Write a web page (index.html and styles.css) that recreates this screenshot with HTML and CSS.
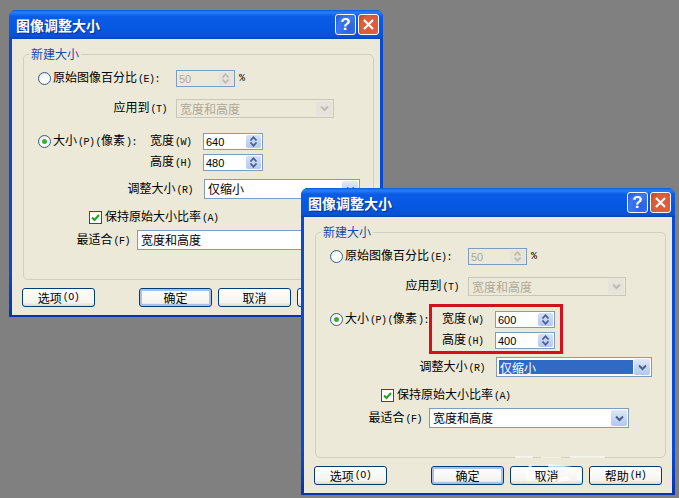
FILE: index.html
```html
<!DOCTYPE html>
<html lang="zh-CN">
<head>
    <meta charset="UTF-8">
    <title>图像调整大小</title>
    <link rel="stylesheet" href="styles.css">
</head>
<body>
    <svg class="icon-defs" width="0" height="0">
        <symbol id="chevron" viewBox="0 0 9 7">
            <path d="M1 1.5 L4.5 5 L8 1.5" fill="none" stroke="currentColor" stroke-width="2"/>
        </symbol>
        <symbol id="arrow-up" viewBox="0 0 9 5">
            <path d="M1.5 4.5 L4.5 1.2 L7.5 4.5" fill="none" stroke="currentColor" stroke-width="1.7"/>
        </symbol>
        <symbol id="arrow-down" viewBox="0 0 9 5">
            <path d="M1.5 0.5 L4.5 3.8 L7.5 0.5" fill="none" stroke="currentColor" stroke-width="1.7"/>
        </symbol>
        <symbol id="tick" viewBox="0 0 11 11">
            <path d="M2 5.5 L4.5 8 L9 3" fill="none" stroke="currentColor" stroke-width="2"/>
        </symbol>
    </svg>

    <!-- окно сзади -->
    <div class="dialog dialog-back">
        <div class="titlebar">
            <span class="title">图像调整大小</span>
            <span class="title-btn help">?</span>
            <span class="title-btn close">
                <svg viewBox="0 0 13 13" width="13" height="13"><path d="M2 2 L11 11 M11 2 L2 11" stroke="#fff" stroke-width="2.2"/></svg>
            </span>
        </div>
        <div class="dialog-body">
            <fieldset class="group">
                <legend>新建大小</legend>
                <div class="row row-percent">
                    <span class="choice"><i class="radio"></i><span>原始图像百分比<b>(E):</b></span></span>
                    <span class="field field-percent disabled">
                        <span class="value">50</span>
                        <span class="spin"><span><svg><use href="#arrow-up"/></svg></span><span><svg><use href="#arrow-down"/></svg></span></span>
                    </span>
                    <span class="unit">%</span>
                </div>
                <div class="row row-apply">
                    <span class="lbl lbl-apply">应用到<b>(T)</b></span>
                    <span class="field select-apply disabled">
                        <span class="value">宽度和高度</span>
                        <span class="drop"><svg><use href="#chevron"/></svg></span>
                    </span>
                </div>
                <div class="row row-size">
                    <span class="choice choice-size"><i class="radio checked"></i><span>大小<b>(P)</b><b>(</b>像素<b>):</b></span></span>
                    <div class="size-fields">
                        <div class="size-line">
                            <span class="lbl-size">宽度<b>(W)</b></span>
                            <span class="field field-size">
                                <span class="value">640</span>
                                <span class="spin"><span><svg><use href="#arrow-up"/></svg></span><span><svg><use href="#arrow-down"/></svg></span></span>
                            </span>
                        </div>
                        <div class="size-line">
                            <span class="lbl-size">高度<b>(H)</b></span>
                            <span class="field field-size">
                                <span class="value">480</span>
                                <span class="spin"><span><svg><use href="#arrow-up"/></svg></span><span><svg><use href="#arrow-down"/></svg></span></span>
                            </span>
                        </div>
                    </div>
                </div>
                <div class="row row-resize">
                    <span class="lbl lbl-resize">调整大小<b>(R)</b></span>
                    <span class="field select-resize">
                        <span class="value">仅缩小</span>
                        <span class="drop"><svg><use href="#chevron"/></svg></span>
                    </span>
                </div>
                <div class="row row-keep">
                    <i class="checkbox"><svg><use href="#tick"/></svg></i>
                    <span>保持原始大小比率<b>(A)</b></span>
                </div>
                <div class="row row-fit">
                    <span class="lbl lbl-fit">最适合<b>(F)</b></span>
                    <span class="field select-fit">
                        <span class="value">宽度和高度</span>
                        <span class="drop"><svg><use href="#chevron"/></svg></span>
                    </span>
                </div>
            </fieldset>
            <div class="buttons">
                <span class="btn btn-options">选项<b>(O)</b></span>
                <span class="btn btn-default">确定</span>
                <span class="btn">取消</span>
                <span class="btn">帮助<b>(H)</b></span>
            </div>
        </div>
    </div>

    <!-- окно спереди -->
    <div class="dialog dialog-front">
        <div class="titlebar">
            <span class="title">图像调整大小</span>
            <span class="title-btn help">?</span>
            <span class="title-btn close">
                <svg viewBox="0 0 13 13" width="13" height="13"><path d="M2 2 L11 11 M11 2 L2 11" stroke="#fff" stroke-width="2.2"/></svg>
            </span>
        </div>
        <div class="dialog-body">
            <fieldset class="group">
                <legend>新建大小</legend>
                <div class="row row-percent">
                    <span class="choice"><i class="radio"></i><span>原始图像百分比<b>(E):</b></span></span>
                    <span class="field field-percent disabled">
                        <span class="value">50</span>
                        <span class="spin"><span><svg><use href="#arrow-up"/></svg></span><span><svg><use href="#arrow-down"/></svg></span></span>
                    </span>
                    <span class="unit">%</span>
                </div>
                <div class="row row-apply">
                    <span class="lbl lbl-apply">应用到<b>(T)</b></span>
                    <span class="field select-apply disabled">
                        <span class="value">宽度和高度</span>
                        <span class="drop"><svg><use href="#chevron"/></svg></span>
                    </span>
                </div>
                <div class="row row-size">
                    <span class="choice choice-size"><i class="radio checked"></i><span>大小<b>(P)</b><b>(</b>像素<b>):</b></span></span>
                    <div class="size-fields marked">
                        <div class="size-line">
                            <span class="lbl-size">宽度<b>(W)</b></span>
                            <span class="field field-size">
                                <span class="value">600</span>
                                <span class="spin"><span><svg><use href="#arrow-up"/></svg></span><span><svg><use href="#arrow-down"/></svg></span></span>
                            </span>
                        </div>
                        <div class="size-line">
                            <span class="lbl-size">高度<b>(H)</b></span>
                            <span class="field field-size">
                                <span class="value">400</span>
                                <span class="spin"><span><svg><use href="#arrow-up"/></svg></span><span><svg><use href="#arrow-down"/></svg></span></span>
                            </span>
                        </div>
                    </div>
                </div>
                <div class="row row-resize">
                    <span class="lbl lbl-resize">调整大小<b>(R)</b></span>
                    <span class="field select-resize focused">
                        <span class="value">仅缩小</span>
                        <span class="drop"><svg><use href="#chevron"/></svg></span>
                    </span>
                </div>
                <div class="row row-keep">
                    <i class="checkbox"><svg><use href="#tick"/></svg></i>
                    <span>保持原始大小比率<b>(A)</b></span>
                </div>
                <div class="row row-fit">
                    <span class="lbl lbl-fit">最适合<b>(F)</b></span>
                    <span class="field select-fit">
                        <span class="value">宽度和高度</span>
                        <span class="drop"><svg><use href="#chevron"/></svg></span>
                    </span>
                </div>
            </fieldset>
            <div class="buttons">
                <span class="btn btn-options">选项<b>(O)</b></span>
                <span class="btn btn-default">确定</span>
                <span class="btn">取消</span>
                <span class="btn">帮助<b>(H)</b></span>
            </div>
        </div>
    </div>

    <!-- белые следы водяного знака на кнопках -->
    <svg class="smudge" width="110" height="34" viewBox="0 0 110 34">
        <path d="M0 0 H18 V2 H0 Z M26 1 H46 V2 H26 Z M55 0 H90 V2 H55 Z" fill="#f8f7f0" opacity="0.8"/>
        <path d="M10 14 L16 8 L20 22 L26 24 L12 25 Z M32 8 L58 11 L50 13 L34 12 Z M36 24 L52 20 L56 24 L40 27 Z M62 16 H66 V24 H62 Z" fill="#fff" opacity="0.75"/>
    </svg>
</body>
</html>
```

FILE: styles.css
```css
:root {
    --bg-desktop: #808080;
    --bg-dialog: #ece9d8;
    --border-field: #7f9db9;
    --border-button: #003c74;
    --blue-frame: #0a4ad2;
    --text-color: #000;
    --text-disabled: #aca899;
}

body {
    margin: 0;
    width: 679px;
    height: 498px;
    overflow: hidden;
    position: relative;
    background-color: var(--bg-desktop);
    color: var(--text-color);
    font-family: "Noto Sans CJK SC", "Liberation Sans", sans-serif;
    font-size: 12px;
    line-height: 16px;
}

.icon-defs {
    position: absolute;
}

.smudge {
    position: absolute;
    left: 515px;
    top: 456px;
}

/* латинские подписи в скобках */
b {
    font-family: "Liberation Mono", monospace;
    font-size: 10px;
    font-weight: normal;
    letter-spacing: -0.5px;
    margin-left: 1px;
}

.dialog {
    position: absolute;
    width: 374px;
    height: 307px;
    box-sizing: border-box;
    display: flex;
    flex-direction: column;
    background: linear-gradient(var(--blue-frame) 85%, #0832b4);
    border-radius: 7px 7px 0 0;
    padding: 0 3px 2px;
}

.dialog-back {
    left: 9px;
    top: 10px;
}

.dialog-front {
    left: 301px;
    top: 188px;
}

.titlebar {
    height: 29px;
    margin: 0 -3px;
    padding: 0 4px 0 7px;
    display: flex;
    align-items: center;
    gap: 2px;
    border-radius: 7px 7px 0 0;
    background: linear-gradient(#0a5ae6 0, #2a7df5 8%, #0a5ce6 22%, #0557e2 70%, #0a52d0 92%, #0444b8 100%);
}

.title {
    flex: 1;
    color: #fff;
    font-size: 14px;
    font-weight: bold;
    text-shadow: 1px 1px 1px #0a2f8a;
}

.title-btn {
    width: 21px;
    height: 21px;
    box-sizing: border-box;
    border: 1px solid #fff;
    border-radius: 3px;
    display: flex;
    align-items: center;
    justify-content: center;
    color: #fff;
    font-family: "Liberation Sans", sans-serif;
    font-size: 17px;
    font-weight: bold;
}

.help {
    background: radial-gradient(circle at 70% 70%, #2a5fe0, #3c78ee 60%, #2450c8);
}

.close {
    background: radial-gradient(circle at 60% 60%, #e2583a, #d9603c 60%, #c03c1c);
}

.dialog-body {
    flex: 1;
    background-color: var(--bg-dialog);
    padding: 7px 6px 0 11px;
}

.group {
    margin: 0;
    height: 234px;
    box-sizing: border-box;
    padding: 0;
    border: 1px solid #d0d0bf;
    border-radius: 5px;
}

.group legend {
    margin-left: 5px;
    padding: 0 2px;
    color: #1a48a8;
}

.row {
    display: flex;
    align-items: center;
}

.row-percent {
    margin-top: 8px;
    height: 17px;
}

.row-apply {
    margin-top: 12px;
    height: 19px;
}

.row-size {
    margin-top: 15px;
    align-items: flex-start;
}

.row-resize {
    margin-top: 8px;
    height: 20px;
}

.row-keep {
    margin-top: 12px;
    height: 13px;
    padding-left: 65px;
    gap: 3px;
}

.row-fit {
    margin-top: 6px;
    height: 20px;
}

.choice {
    width: 152px;
    box-sizing: border-box;
    padding-left: 14px;
    display: flex;
    align-items: center;
    gap: 2px;
    white-space: nowrap;
}

.choice-size {
    width: 126px;
    height: 17px;
}

.lbl {
    text-align: right;
    white-space: nowrap;
}

.lbl-apply {
    width: 143px;
    margin-right: 9px;
}

.lbl-resize {
    width: 169px;
    margin-right: 11px;
}

.lbl-fit {
    width: 106px;
    margin-right: 7px;
}

.radio {
    width: 13px;
    height: 13px;
    box-sizing: border-box;
    flex: none;
    border: 1px solid #2f5f8f;
    border-radius: 50%;
    background: radial-gradient(circle at 65% 65%, #fff 40%, #dcd8c8);
    display: flex;
    align-items: center;
    justify-content: center;
}

.radio.checked::after {
    content: "";
    width: 5px;
    height: 5px;
    border-radius: 50%;
    background-color: #35b035;
}

.checkbox {
    width: 13px;
    height: 13px;
    box-sizing: border-box;
    border: 1px solid #1c5180;
    background-color: #fff;
    color: #21a121;
}

.checkbox svg {
    display: block;
    width: 11px;
    height: 11px;
}

.field {
    display: flex;
    align-items: stretch;
    box-sizing: border-box;
    border: 1px solid var(--border-field);
    background-color: #fff;
}

.value {
    flex: 1;
    padding-left: 2px;
    align-self: center;
    white-space: nowrap;
}

.field-percent,
.field-size {
    font-family: "Liberation Sans", sans-serif;
    font-size: 11px;
}

.field-percent {
    width: 59px;
    height: 17px;
}

.field-size {
    width: 60px;
    height: 17px;
}

.select-apply {
    width: 158px;
    height: 19px;
}

.select-resize {
    width: 156px;
    height: 20px;
}

.select-fit {
    width: 200px;
    height: 20px;
}

.select-apply .value,
.select-resize .value,
.select-fit .value {
    padding-left: 3px;
}

.unit {
    margin-left: 4px;
    font-family: "Liberation Mono", monospace;
    font-size: 10px;
}

.spin {
    width: 15px;
    margin: 1px;
    display: flex;
    flex-direction: column;
    border-radius: 2px;
    background: linear-gradient(#d6e0f8, #b6c8f0);
}

.spin span {
    flex: 1;
    display: flex;
    align-items: center;
    justify-content: center;
    color: #45608c;
}

.spin svg {
    width: 9px;
    height: 5px;
}

.drop {
    width: 16px;
    margin: 1px;
    display: flex;
    align-items: center;
    justify-content: center;
    border-radius: 2px;
    background: linear-gradient(#dfe8fb, #b2c6f2);
    color: #45608c;
}

.drop svg {
    width: 9px;
    height: 7px;
}

.disabled {
    background-color: var(--bg-dialog);
    color: var(--text-disabled);
}

.select-apply.disabled {
    border-color: #c9c7ba;
}

.disabled .spin {
    background: #e6e4da;
}

.disabled .drop {
    background: #e6e4da;
}

.disabled .spin span,
.disabled .drop {
    color: #bdbbb0;
}

.focused .value {
    margin: 2px 0 2px 2px;
    align-self: stretch;
    padding-left: 1px;
    background-color: #316ac5;
    color: #fff;
}

.size-fields {
    display: flex;
    flex-direction: column;
    gap: 4px;
}

/* красная рамка поверх диалога */
.size-fields.marked {
    position: relative;
}

.size-fields.marked::after {
    content: "";
    position: absolute;
    left: -13px;
    top: -7px;
    width: 128px;
    height: 44px;
    border: 3px solid #d4101c;
}

.size-line {
    display: flex;
    align-items: center;
    height: 17px;
}

.lbl-size {
    width: 53px;
    white-space: nowrap;
}

.buttons {
    display: flex;
    margin-top: 8px;
    margin-left: -1px;
    gap: 6px;
}

.btn {
    width: 73px;
    height: 19px;
    box-sizing: border-box;
    border: 1px solid var(--border-button);
    border-radius: 3px;
    background: linear-gradient(#fff, #f4f3ee 80%, #dcd8c8);
    display: flex;
    align-items: center;
    justify-content: center;
    white-space: nowrap;
}

.btn-options {
    margin-right: 38px;
}

.btn-default {
    box-shadow: inset 0 0 0 2px #a9c0e8;
}
```
